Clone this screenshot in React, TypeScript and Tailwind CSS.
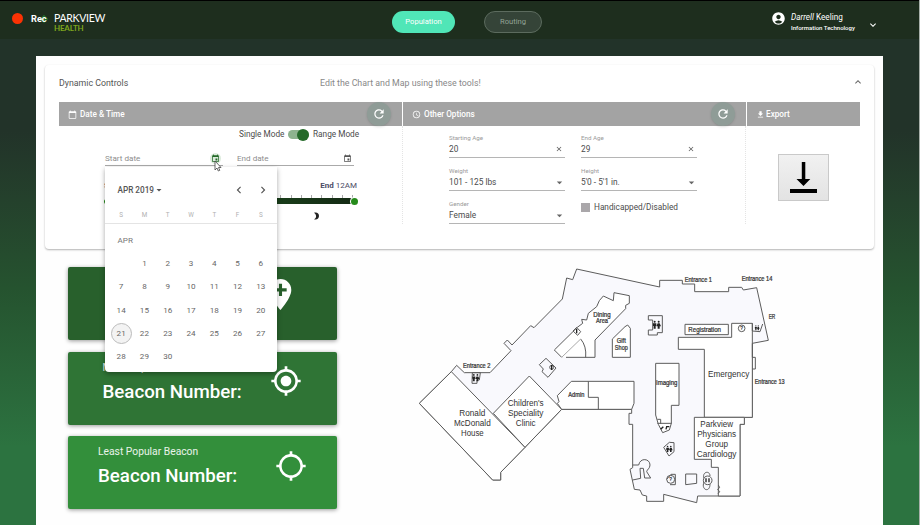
import type { ReactNode } from "react";
import {
  MdAccountCircle,
  MdAddLocation,
  MdArrowDropDown,
  MdCalendarToday,
  MdChevronLeft,
  MdChevronRight,
  MdClose,
  MdEvent,
  MdExpandLess,
  MdExpandMore,
  MdFileDownload,
  MdGpsFixed,
  MdGpsNotFixed,
  MdRefresh,
  MdSchedule,
} from "react-icons/md";

function Header() {
  return (
    <header className="flex h-[39px] shrink-0 items-start border-t border-black bg-[#1e2e1e] text-white">
      <div className="ml-3 mt-3 size-[11px] shrink-0 rounded-full bg-[#fb3204]" />
      <div className="ml-[8px] mt-[12px] flex w-[22px] items-start text-[9.2px] font-bold leading-[12px]">
        <span className="z-10">Rec</span>
        <span className="-ml-[6px] mt-[3px] size-[6px] shrink-0 rotate-45 bg-[#246b2b]" />
      </div>
      <div className="w-[340px] pl-px font-['Lato',sans-serif]">
        <div className="mt-[11px] text-[10.5px] leading-[13px] tracking-[-0.3px]">PARKVIEW</div>
        <div className="-mt-[1px] text-[8px] font-bold leading-[9px] tracking-[-0.2px] text-[#7da51d]">HEALTH</div>
      </div>
      <button className="-ml-[1px] mt-[10px] h-[22px] w-[63px] rounded-full bg-[#50e6b7] text-[7.6px] text-white">Population</button>
      <button className="ml-[29px] mt-[10px] h-[22px] w-[58px] rounded-full border border-[#5c6b5e] bg-[#354438] text-[7.6px] text-[#93a396]">Routing</button>
      <MdAccountCircle className="ml-[229px] mt-[10px] size-[15px]" />
      <div className="ml-[5px] mt-[10px] w-[76px] whitespace-nowrap">
        <div className="text-[8.2px] leading-[13px]"><i>Darrell</i> Keeling</div>
        <div className="text-[6px] font-medium leading-[8px]">Information Technology</div>
      </div>
      <MdExpandMore className="mt-[18px] size-[12px]" />
    </header>
  );
}

function BarCell({ icon, label, refresh, className }: { icon: ReactNode; label: string; refresh?: boolean; className: string }) {
  return (
    <div className={`flex h-6 items-center bg-[#a3a3a3] text-[8.2px] font-medium text-white ${className}`}>
      {icon}
      <span className="grow">{label}</span>
      {refresh && (
        <span className="mr-[11px] flex size-6 items-center justify-center rounded-full bg-[#8f9c97] shadow">
          <MdRefresh className="size-[14px] stroke-white" />
        </span>
      )}
    </div>
  );
}

function Field({ label, value, clear }: { label: string; value: string; clear?: boolean }) {
  return (
    <div className="h-[33px] w-[116px]">
      <div className="text-[6.2px] leading-[8px] text-[#9a9a9a]">{label}</div>
      <div className="flex h-[15.5px] items-center justify-between border-b border-[#b5b5b5] text-[8.3px] text-[#4b4b4b]">
        <span>{value}</span>
        {clear ? <MdClose className="mr-[2px] size-[8px] text-[#555]" /> : <MdArrowDropDown className="-mr-[1px] size-[13px] text-[#666]" />}
      </div>
    </div>
  );
}

const WEEKDAYS = ["S", "M", "T", "W", "T", "F", "S"];

function Calendar() {
  return (
    <div className="absolute left-[46px] top-[41px] z-10 h-[205px] w-[172px] rounded-b-sm bg-white px-[4.5px] shadow-[0_2px_5px_rgba(0,0,0,0.35)]">
      <div className="flex h-[46px] items-center pl-2 text-[8.2px] font-medium text-[#555]">
        <span>APR 2019</span>
        <MdArrowDropDown className="-ml-px size-[12px]" />
        <span className="grow" />
        <MdChevronLeft className="mr-[10px] size-[14px]" />
        <MdChevronRight className="mr-[3px] size-[14px]" />
      </div>
      <div className="-mx-[4.5px] grid h-[11px] grid-cols-7 border-b border-[#e4e4e4] px-[4.5px] text-center text-[6.3px] leading-[4px] text-[#b0b0b0]">
        {WEEKDAYS.map((d, i) => <span key={i}>{d}</span>)}
      </div>
      <div className="h-[27.5px] pl-2 pt-[10px] text-[8.1px] leading-[12px] text-[#777]">APR</div>
      <div className="grid auto-rows-[23.3px] grid-cols-7 text-[8.1px] text-[#666]">
        <span />
        {Array.from({ length: 30 }, (_, i) => i + 1).map((d) => (
          <span key={d} className="flex items-center justify-center">
            {d === 21 ? <span className="flex size-[21px] shrink-0 items-center justify-center rounded-full border border-[#bbb] bg-[#f3f3f3]">21</span> : d}
          </span>
        ))}
      </div>
    </div>
  );
}

function DateTime() {
  return (
    <div className="relative h-[98px] w-[343px] text-[8.25px] text-[#4b4b4b]">
      <div className="flex h-[17px] items-center pl-[180px]">
        <span className="w-[49px]">Single Mode</span>
        <span className="flex h-[9px] w-[21px] items-center justify-end rounded-full bg-[#8db38e]">
          <span className="size-[12px] shrink-0 rounded-full bg-[#246a29]" />
        </span>
        <span className="ml-[4px]">Range Mode</span>
      </div>
      <div className="ml-[46px] mt-[8px] flex gap-[14px] text-[8.1px] text-[#8d8d8d]">
        <div className="flex h-[15px] w-[118px] items-center justify-between border-b border-[#aaa]">
          <span>Start date</span>
          <span className="mr-[2px] flex size-[11px] items-center justify-center rounded-full bg-[#dcebdc]"><MdEvent className="size-[9px] text-[#246a29]" /></span>
        </div>
        <div className="flex h-[15px] w-[117px] items-center justify-between border-b border-[#aaa]">
          <span>End date</span>
          <MdEvent className="mr-[2px] size-[9px] text-[#555]" />
        </div>
      </div>
      <div className="ml-[45px] mr-[45px] mt-[14px] flex h-[12px] items-center justify-between text-[8px] text-[#4b4b65]">
        <b className="font-medium">Start</b>
        <span><b>End</b> 12AM</span>
      </div>
      <div className="ml-[46px] mt-[3px] flex h-[3px] w-[249px] justify-between px-[1px]">
        {Array.from({ length: 25 }, (_, i) => <span key={i} className="w-px bg-[#aaa]" />)}
      </div>
      <div className="ml-[46px] flex h-[6px] w-[249px] items-center justify-between bg-gradient-to-r from-[#1f6b24] to-[#142a14]">
        <span className="-ml-[1px] size-[5px] rounded-full bg-[#258a1a]" />
        <span className="-mr-[4px] size-[7px] shrink-0 rounded-full bg-[#258a1a] ring-1 ring-white" />
      </div>
      <svg className="ml-[254px] mt-[8px] h-[8px] w-[7px]" viewBox="0 0 7 8"><path d="M1 .8C4-.2 6 1.6 6 4S4 8 1 7.2C4 5.8 3.5 2.2 1 .8Z" fill="#222" /></svg>
      <Calendar />
      <svg className="absolute left-[155px] top-[34px] z-20 h-[12px] w-[8px]" viewBox="0 0 8 12"><path d="M1 1v9l2-2 1.3 3 1.5-.7L4.5 7.5H7Z" fill="#fff" stroke="#444" strokeWidth=".8" /></svg>
    </div>
  );
}

function Controls() {
  return (
    <section className="ml-[9px] mt-[9px] h-[184px] w-[829px] rounded-sm bg-white px-[14px] shadow-[0_1px_2px_rgba(0,0,0,0.3)]">
      <div className="flex h-[37px] items-center text-[8.8px]">
        <span className="w-[261px] text-[#555]">Dynamic Controls</span>
        <span className="grow text-[#888]">Edit the Chart and Map using these tools!</span>
        <MdExpandLess className="-mr-[4px] -mt-[3px] size-[12px] text-[#666]" />
      </div>
      <div className="flex w-[801px] gap-px">
        <BarCell className="w-[343px] pl-[9px]" icon={<MdCalendarToday className="mr-[3px] size-[9px]" />} label="Date & Time" refresh />
        <BarCell className="w-[343px] pl-[9px]" icon={<MdSchedule className="mr-[3px] size-[9px]" />} label="Other Options" refresh />
        <BarCell className="grow pl-[9px]" icon={<MdFileDownload className="mr-[1px] size-[9px]" />} label="Export" />
      </div>
      <div className="flex">
        <DateTime />
        <div className="grid h-[98px] w-[344px] grid-cols-[116px_116px] content-start gap-x-4 border-x border-dotted border-[#e4e4e4] pl-[46px] pt-[8px]">
          <Field label="Starting Age" value="20" clear />
          <Field label="End Age" value="29" clear />
          <Field label="Weight" value="101 - 125 lbs" />
          <Field label="Height" value="5'0 - 5'1 in." />
          <Field label="Gender" value="Female" />
          <label className="flex h-[15px] items-center text-[8.25px] text-[#4b4b4b]"><span className="mr-1 size-[9px] bg-[#aaa7aa]" />Handicapped/Disabled</label>
        </div>
        <button className="ml-[32px] mt-[28px] flex h-[47px] w-[51px] items-center justify-center border border-[#c9c9c9] bg-gradient-to-b from-[#f1f1f1] to-[#e3e3e3]">
          <svg className="h-[31px] w-[27px]" viewBox="0 0 27 31"><path d="M11.8 0h3.5v17h5L13.5 24 6.5 17h5.3ZM0 27h27v4H0Z" /></svg>
        </button>
      </div>
    </section>
  );
}

function BeaconCard({ title, className, icon }: { title?: string; className: string; icon: ReactNode }) {
  return (
    <div className={`flex h-[73px] w-[268.5px] items-start rounded-[2px] text-white shadow-[0_1px_4px_rgba(0,0,0,0.4)] ${className}`}>
      <div className="grow">
        {title && (
          <>
            <div className="mt-[8px] text-[10.3px] leading-[15px] text-white/90">{title}</div>
            <div className="mt-[5px] text-[18.7px] font-medium leading-[24px]">Beacon Number:</div>
          </>
        )}
      </div>
      {icon}
    </div>
  );
}

function Label({ x, y, w, size = 19, children }: { x: number; y: number; w: number; size?: number; children: string }) {
  return (
    <text x={x} y={y} fontSize={size} textLength={w} lengthAdjust="spacingAndGlyphs" textAnchor="middle" fill="#333" stroke="#333" strokeWidth={size < 24 ? 0.7 : 0}>
      {children}
    </text>
  );
}

function People({ x, y, s = 1 }: { x: number; y: number; s?: number }) {
  return (
    <g transform={`translate(${x} ${y}) scale(${s})`} fill="#222" stroke="none">
      <circle cx="6" cy="3" r="3" /><path d="M1 8h10v8H9v8H3v-8H1Z" />
      <circle cx="18" cy="3" r="3" /><path d="M15 8h6l4 9h-4v7h-6v-7h-4Z" />
    </g>
  );
}

/* Floor plan drawn on a 3x grid */
function FloorPlan() {
  return (
    <svg className="mt-[4px] h-[250px] w-[390px]" viewBox="0 0 1170 750" fill="none" stroke="#5c5c5c" strokeWidth="3" fontFamily="Liberation Sans, Arial, sans-serif">
      <path fill="#f9f9fd" d="M124 335 140 316 163 338H240L303 272 282 250 292 240 306 255 362 197 372 203 457 117 470 54 488 59 500 27 749 81V61H817V72H854V95H956V82H995L1000 90 1040 83 1075 241 1027 250V472H1003V493H990V708H863L860 728 761 703V724H710V708L697 705 690 690 673 688 660 628 668 623V493H657V460H665V448H455L345 562 272 637V660H248L28 430Z" />
      <g fill="#fff">
        <path d="M124 335 345 562 272 637V660H248L28 430Z" />
        <path d="M358 348 455 448 345 562 250 460Z" />
        <path d="M484 364H672V430L665 448H455L442 430 447 425 442 407Z" />
        <path d="M1027 472H883V268H805V232H965V190H1027Z" />
        <path d="M853 472H1003V493H990V708H925V622H904V598H853Z" />
        <path d="M737 310H807V436H784V490L778 510 758 518 745 493 737 465Z" />
        <path d="M825 193H955V224H825Z" />
        <path d="M607 292H661V205L653 195 645 200 607 237Z" />
        <path stroke="none" d="M490 213 502 202 518 190 515 180 530 180 535 160 560 140 568 122 580 108 610 122 612 98 658 107V130L647 136V146L555 240V292H468L455 292 433 270Z" />
      </g>
      <path d="M468 292H555V240L647 146V136L658 130V107L612 98 610 122 580 108 568 122 560 140 535 160 530 180 515 178 518 190 502 202 433 270 455 292" />
      <path d="M535 364V412H565V448M512 237Q530 258 527 292" />
      <path d="M455 292 512 237" stroke="#aaa" />
      <path d="M715 167H757V218H742V225H715V210H728V180H715ZM1027 250V292H1036V327H1027M1027 190V213L1050 215 1058 192M742 490H785M742 478H752V492" />
      <path d="M388 314 408 295 438 324 414 352 396 335 400 327ZM489 213 500 202 512 215 503 226ZM187 338H211L208 360H201V370H186Z" />
      <path d="M761 562 778 547 792 548V575L777 588ZM827 642H860V670L827 674ZM770 658 783 643H796V674H780" />
      <path d="M668 615H686C690 592 720 595 720 615 720 626 711 628 710 635L722 654H704L700 625H690L692 655 668 660M882 655C875 635 900 630 900 648M882 666C872 690 900 700 900 672M925 675l4 8-6 5 6 7-5 6" />
      <circle cx="782" cy="658" r="12" /><circle cx="893" cy="661" r="13" /><circle cx="995" cy="205" r="10" /><circle cx="425" cy="322" r="6" />
      <People x={186} y={342} s={0.9} />
      <People x={728} y={182} />
      <People x={1034} y={196} s={0.6} />
      <People x={768} y={557} s={0.8} />
      <path d="M425 315v15M500 207v13M768 508l2-8h8M752 508l8-8M888 655v12M897 655v12" stroke="#222" strokeWidth="4" />
      <Label x={995} y={211} w={8} size={16}>?</Label>
      <Label x={782} y={664} w={8} size={16}>?</Label>
      <Label x={200} y={325} w={82}>Entrance 2</Label>
      <Label x={865} y={66} w={82}>Entrance 1</Label>
      <Label x={1041} y={64} w={92}>Entrance 14</Label>
      <Label x={1079} y={371} w={90}>Entrance 13</Label>
      <Label x={1086} y={178} w={20}>ER</Label>
      <Label x={576} y={170} w={52}>Dining</Label>
      <Label x={576} y={190} w={36}>Area</Label>
      <Label x={634} y={249} w={27}>Gift</Label>
      <Label x={634} y={270} w={39}>Shop</Label>
      <Label x={884} y={216} w={98} size={20}>Registration</Label>
      <Label x={770} y={375} w={64}>Imaging</Label>
      <Label x={499} y={411} w={48}>Admin</Label>
      <Label x={956} y={352} w={124} size={26}>Emergency</Label>
      <Label x={187} y={467} w={78} size={25}>Ronald</Label>
      <Label x={187} y={497} w={110} size={25}>McDonald</Label>
      <Label x={187} y={527} w={68} size={25}>House</Label>
      <Label x={347} y={439} w={108} size={25}>Children's</Label>
      <Label x={347} y={469} w={106} size={25}>Speciality</Label>
      <Label x={347} y={498} w={59} size={25}>Clinic</Label>
      <Label x={920} y={500} w={98} size={25}>Parkview</Label>
      <Label x={920} y={530} w={117} size={25}>Physicians</Label>
      <Label x={920} y={560} w={68} size={25}>Group</Label>
      <Label x={920} y={590} w={119} size={25}>Cardiology</Label>
    </svg>
  );
}

export default function App() {
  return (
    <div className="flex h-[525px] w-[920px] flex-col overflow-hidden border-r border-[#a8b0aa] bg-gradient-to-b from-[#223329] from-25% via-[#25532f] via-55% to-[#2c7340] to-85% font-['Roboto',sans-serif]">
      <Header />
      <main className="ml-[36px] mt-[17px] h-[469px] w-[847px] bg-[#fefefe]">
        <Controls />
        <div className="flex pl-[32px]">
          <div className="mt-[18px] flex w-[342px] flex-col gap-[11.5px]">
            <BeaconCard className="bg-[#28602c] pl-[35px]" icon={<MdAddLocation className="mr-[38px] mt-[9px] size-[37px]" />} />
            <BeaconCard title="Most Popular Beacon" className="bg-[#2f7435] pl-[34.5px]" icon={<MdGpsFixed className="mr-[35px] mt-[13.5px] size-[32px]" />} />
            <BeaconCard title="Least Popular Beacon" className="bg-[#338f3b] pl-[30px]" icon={<MdGpsNotFixed className="mr-[30px] mt-[13.5px] size-[32px]" />} />
          </div>
          <div className="mt-[7px]"><FloorPlan /></div>
        </div>
      </main>
    </div>
  );
}
